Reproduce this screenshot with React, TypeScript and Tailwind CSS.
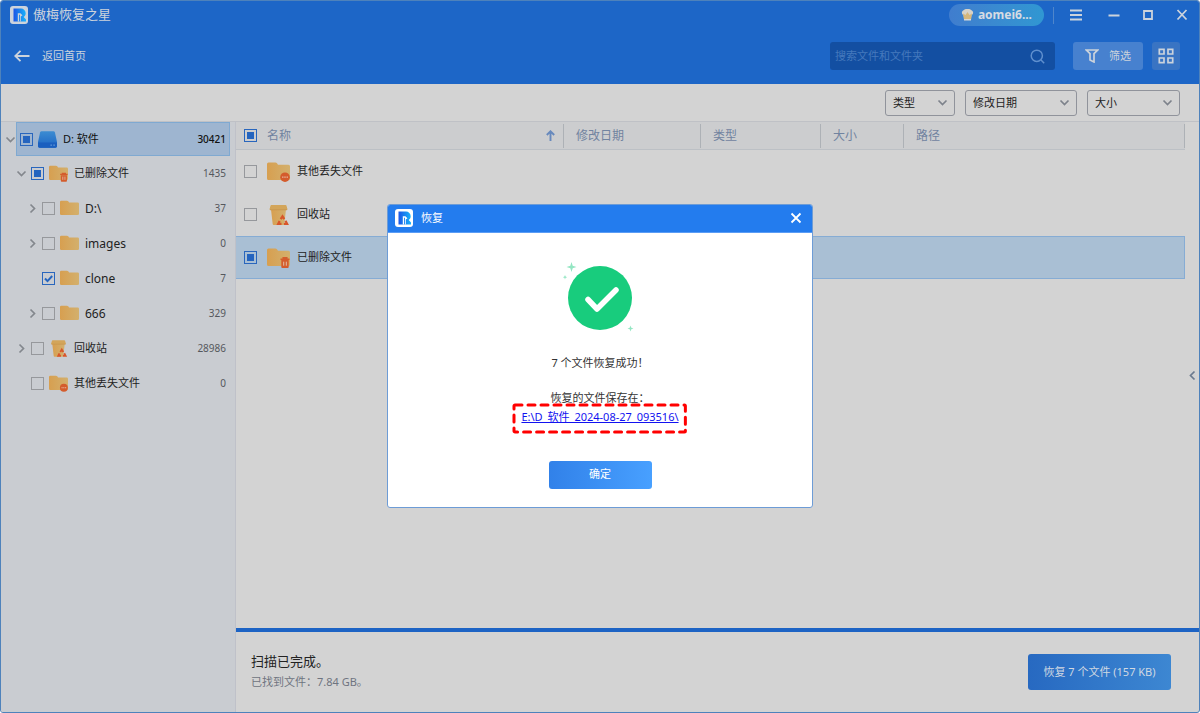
import { useState } from "react";
import type { ReactNode } from "react";

type CheckState = "none" | "some" | "all";
type IconKind = "drive" | "folder" | "deleted" | "lost" | "recycle";

type TreeItem = {
  name: string;
  count: number;
  level: 0 | 1 | 2;
  icon: IconKind;
  check: CheckState;
  arrow?: "open" | "closed";
};

const TREE: TreeItem[] = [
  { name: "D: 软件", count: 30421, level: 0, icon: "drive", check: "some", arrow: "open" },
  { name: "已删除文件", count: 1435, level: 1, icon: "deleted", check: "some", arrow: "open" },
  { name: "D:\\", count: 37, level: 2, icon: "folder", check: "none", arrow: "closed" },
  { name: "images", count: 0, level: 2, icon: "folder", check: "none", arrow: "closed" },
  { name: "clone", count: 7, level: 2, icon: "folder", check: "all" },
  { name: "666", count: 329, level: 2, icon: "folder", check: "none", arrow: "closed" },
  { name: "回收站", count: 28986, level: 1, icon: "recycle", check: "none", arrow: "closed" },
  { name: "其他丢失文件", count: 0, level: 1, icon: "lost", check: "none" },
];

const FILES: { name: string; icon: IconKind; check: CheckState }[] = [
  { name: "其他丢失文件", icon: "lost", check: "none" },
  { name: "回收站", icon: "recycle", check: "none" },
  { name: "已删除文件", icon: "deleted", check: "some" },
];

const INDENT = { 0: "pl-1", 1: "pl-[15px]", 2: "pl-[26px]" };

function Logo() {
  return (
    <svg className="size-[18px] shrink-0" viewBox="0 0 18 18" aria-hidden="true">
      <defs>
        <linearGradient id="logo-fill" x1="0" x2="1">
          <stop offset="0" stopColor="#1b55e6" />
          <stop offset="1" stopColor="#19b4fa" />
        </linearGradient>
      </defs>
      <rect width="18" height="18" rx="3" fill="currentColor" />
      <path d="M3.500 2.500H11a4.700 4.700 0 0 1 4.700 4.700c0 1.700-.8 3-2 3.800l2.300 2.500v2H3.500z" fill="url(#logo-fill)" />
      <path d="M7.800 15.500V7.200h2.600l2.100 2-1.700 1.300v5h-.9V8.800h-.9v6.700z" fill="currentColor" />
    </svg>
  );
}

function FolderBase() {
  return (
    <path
      d="M0 2a1.500 1.500 0 0 1 1.500-1.500h6.800a2 2 0 0 1 1.700.8l1 1.500h10.500A1.500 1.500 0 0 1 23 4.300v12.200a1.500 1.500 0 0 1-1.500 1.500h-20A1.500 1.500 0 0 1 0 16.500z"
      fill="url(#folder-fill)"
    />
  );
}

function ItemIcon({ kind, className }: { kind: IconKind; className: string }) {
  return (
    <svg className={`shrink-0 ${className}`} viewBox="0 0 23 20" aria-hidden="true">
      <defs>
        <linearGradient id="folder-fill" x1="0" x2="1">
          <stop offset="0" stopColor="#d79f50" />
          <stop offset="1" stopColor="#d3b06d" />
        </linearGradient>
        <linearGradient id="drive-fill" x1="0" y1="0" x2="0" y2="1">
          <stop offset="0" stopColor="#3c8cd2" />
          <stop offset="1" stopColor="#1c65c4" />
        </linearGradient>
      </defs>
      {kind === "drive" && (
        <>
          <path d="M2.500 1.500A2 2 0 0 1 4.400 0h14.200a2 2 0 0 1 1.900 1.500L23 13v5a2 2 0 0 1-2 2H2a2 2 0 0 1-2-2v-5z" fill="url(#drive-fill)" />
          <path d="M0 13.500h23V18a2 2 0 0 1-2 2H2a2 2 0 0 1-2-2z" fill="#1a5fbf" />
          <path d="M15 16.800h2M18.500 16.800h2" stroke="#6ea3de" strokeWidth="1.200" />
        </>
      )}
      {kind === "folder" && <FolderBase />}
      {kind === "deleted" && (
        <>
          <FolderBase />
          <path d="M13.500 11.200h9M16.200 11V9.700h3.600V11" stroke="#d45c2c" strokeWidth="1.500" fill="none" />
          <path d="M14.300 12h7.400v7a1 1 0 0 1-1 1h-5.400a1 1 0 0 1-1-1z" fill="#d45c2c" />
          <path d="M16.700 13.700v4M19.300 13.700v4" stroke="#e2bfa6" />
        </>
      )}
      {kind === "lost" && (
        <>
          <FolderBase />
          <circle cx="18" cy="15.200" r="4.800" fill="#d45c2c" />
          <path d="M15.200 15.200h1.200M17.400 15.200h1.200M19.600 15.200h1.200" stroke="#ebc9b5" strokeWidth="1.300" />
        </>
      )}
      {kind === "recycle" && (
        <>
          <path d="M4 4.500h15L17.300 19a1 1 0 0 1-1 .9H6.700a1 1 0 0 1-1-.9z" fill="url(#folder-fill)" />
          <path d="M4.500 0h14a1 1 0 0 1 1 .8l1 3.400a.8.8 0 0 1-.8.8H3.300a.8.8 0 0 1-.8-.8l1-3.400a1 1 0 0 1 1-.8z" fill="#d3a55a" />
          <path d="M3 4.800h17" stroke="#c5914a" strokeWidth=".7" />
          <path d="m13.700 14.200 1.800-2.900 1.800 2.900M18.500 15.800l1.600 3h-3.200M14.500 18.800h-3.300l1.400-2.800" fill="none" stroke="#d8562a" strokeWidth="2.200" />
        </>
      )}
    </svg>
  );
}

function Checkbox({ state, label }: { state: CheckState; label: string }) {
  const tone =
    state === "none"
      ? "border-[#96989c]"
      : state === "some"
        ? "border-[#2966bd] bg-[#2464bf] bg-clip-content"
        : "border-[#2966bd]";
  return (
    <span className="relative flex size-[13px] shrink-0">
      <input
        type="checkbox"
        aria-label={label}
        defaultChecked={state === "all"}
        ref={(el) => {
          if (el) el.indeterminate = state === "some";
        }}
        className={`size-[13px] appearance-none border p-[2px] ${tone}`}
      />
      {state === "all" && (
        <svg className="pointer-events-none absolute inset-0" viewBox="0 0 13 13" aria-hidden="true">
          <path d="m3 6.500 2.500 2.600L10.200 4" fill="none" stroke="#2464bf" strokeWidth="2" />
        </svg>
      )}
    </span>
  );
}

function Chevron({ dir, className }: { dir: "down" | "right" | "left"; className: string }) {
  const d = { down: "M1.500 3.500 5.500 7.500l4-4", right: "m3.500 1.500 4 4-4 4", left: "m7.500 1.500-4 4 4 4" }[dir];
  return (
    <svg className={`size-[11px] ${className}`} viewBox="0 0 11 11" aria-hidden="true">
      <path d={d} fill="none" stroke="currentColor" strokeWidth="1.700" />
    </svg>
  );
}

function FilterSelect({ label, width }: { label: string; width: string }) {
  return (
    <div className={`relative ${width}`}>
      <select
        aria-label={label}
        className="h-[26px] w-full appearance-none rounded-[3px] border border-[#90939b] pl-[7px] text-[11px] text-[#222]"
      >
        <option>{label}</option>
      </select>
      <Chevron dir="down" className="pointer-events-none absolute top-2 right-[7px] text-[#7d828b]" />
    </div>
  );
}

function WindowButton({ label, children }: { label: string; children: ReactNode }) {
  return (
    <button type="button" aria-label={label} className="flex size-4 items-center justify-center">
      <svg className="size-4" viewBox="0 0 16 16" fill="none" stroke="currentColor" strokeWidth="1.800" aria-hidden="true">
        {children}
      </svg>
    </button>
  );
}

function Header() {
  return (
    <header className="flex h-[83px] shrink-0 flex-col bg-[#1d66c7] text-[#ccd3dc]">
      <div className="flex h-7 items-center pr-[9px] pl-[9px]">
        <Logo />
        <h1 className="ml-[5px] flex-1 text-[13px]">傲梅恢复之星</h1>
        <button
          type="button"
          className="flex h-[22px] items-center gap-1 rounded-full bg-linear-to-r from-[#407dce] to-[#3097d2] px-3 text-[12px] font-bold text-[#d6dce3]"
        >
          <svg className="h-3 w-[13px]" viewBox="0 0 13 12" aria-hidden="true">
            <path d="M2.500 6A2.500 2.500 0 0 1 2.500 1.300 4.500 4.500 0 0 1 6.500 0a4.500 4.500 0 0 1 4 1.300A2.500 2.500 0 0 1 10.500 6L10 9H3z" fill="#d7d2c8" />
            <path d="M2 4.500 4.500 6l2-3 2 3L11 4.500l-1 6.500H3z" fill="#d6b77c" />
            <path d="M3 10.800h7" stroke="#d8d8d5" strokeWidth="1.500" />
          </svg>
          aomei6...
        </button>
        <span className="mr-3.5 ml-[9px] h-[17px] w-px bg-[#4f86cb]" />
        <div className="flex items-center gap-[18px]">
          <div className="mr-1">
            <WindowButton label="菜单">
              <path d="M2 3.500h12M2 8h12M2 12.500h12" />
            </WindowButton>
          </div>
          <WindowButton label="最小化">
            <path d="M2.500 8.500h11" />
          </WindowButton>
          <WindowButton label="最大化">
            <path d="M4 4h8v8H4z" />
          </WindowButton>
          <WindowButton label="关闭">
            <path d="m3.500 3 9 9.500M12.500 3l-9 9.500" />
          </WindowButton>
        </div>
      </div>

      <div className="mt-[13px] flex h-7 items-center pr-[19px] pl-[13px] text-[11px]">
        <button type="button" className="flex items-center gap-3">
          <svg className="h-3 w-4" viewBox="0 0 16 12" fill="none" stroke="currentColor" strokeWidth="1.800" aria-hidden="true">
            <path d="M6.500.8 1.200 6l5.300 5.200M1.200 6h14.300" />
          </svg>
          返回首页
        </button>
        <label className="ml-auto flex h-7 w-[225px] items-center rounded-[3px] bg-[#134fa2] pr-2.5 pl-[5px]">
          <input
            type="text"
            aria-label="搜索"
            placeholder="搜索文件和文件夹"
            className="min-w-0 flex-1 bg-transparent placeholder:text-[#4579bd] focus:outline-none"
          />
          <svg className="size-[15px] text-[#5f8fce]" viewBox="0 0 15 15" fill="none" stroke="currentColor" strokeWidth="1.500" aria-hidden="true">
            <circle cx="6.800" cy="6.800" r="5.600" />
            <path d="m10.800 10.800 3.400 3.400" />
          </svg>
        </label>
        <button type="button" className="ml-[18px] flex h-7 w-[70px] items-center justify-center gap-2.5 rounded-[3px] bg-[#4781cf]">
          <svg className="size-[14px]" viewBox="0 0 14 14" fill="none" stroke="currentColor" strokeWidth="1.700" aria-hidden="true">
            <path d="M1.200 1h11.600L9 4.500V13L5 11V4.500z" />
          </svg>
          筛选
        </button>
        <button type="button" aria-label="网格视图" className="ml-[9px] flex size-7 items-center justify-center rounded-[3px] bg-[#3974c3]">
          <svg className="size-4" viewBox="0 0 16 16" fill="none" stroke="currentColor" strokeWidth="1.700" aria-hidden="true">
            <path d="M1.300 1.300h4.700v4.700H1.300zM10 1.300h4.700v4.700H10zM1.300 10h4.700v4.700H1.300zM10 10h4.700v4.700H10z" />
          </svg>
        </button>
      </div>
    </header>
  );
}

function Sidebar() {
  return (
    <nav className="w-[235px] shrink-0 border-r border-[#bfc1c9] bg-[#c9ccd1]">
      <ul>
        {TREE.map((item) => {
          const root = item.level === 0;
          const latin = /^[\x20-\x7e]+$/.test(item.name);
          return (
            <li key={item.name} className={`flex items-center pr-[5px] ${INDENT[item.level]} ${root ? "h-[34px]" : "h-[35px]"}`}>
              <button type="button" aria-label={`展开 ${item.name}`} className="flex w-[11px] shrink-0 justify-center text-[#83878d]">
                {item.arrow && <Chevron dir={item.arrow === "open" ? "down" : "right"} className="" />}
              </button>
              <div
                className={`flex h-full flex-1 items-center border pr-[3px] pl-[3px] ${root ? "border-[#7fa9d1] bg-[#9eb5d0] text-[#111]" : "border-transparent text-[#222]"}`}
              >
                <Checkbox state={item.check} label={item.name} />
                <ItemIcon kind={item.icon} className="mr-1.5 ml-[5px] h-[17px] w-[19px]" />
                <span className={`flex-1 ${latin ? "text-[12px]" : "text-[11px]"}`}>{item.name}</span>
                <span className={`text-[10px] ${root ? "font-medium" : "text-[#55585d]"}`}>{item.count}</span>
              </div>
            </li>
          );
        })}
      </ul>
    </nav>
  );
}

function FileTable() {
  return (
    <table className="w-full table-fixed border-separate border-spacing-0 text-left">
      <colgroup>
        <col className="w-[328px]" />
        <col className="w-[137px]" />
        <col className="w-[120px]" />
        <col className="w-[83px]" />
        <col />
      </colgroup>
      <thead className="bg-[#cccdcf] text-[12px] text-[#7183a0]">
        <tr>
          <th className="h-7 border-b border-[#bcc0c5] p-0 font-normal">
            <div className="flex h-6 items-center border-r border-[#adb1b6] pr-2 pl-2">
              <Checkbox state="some" label="全选" />
              <span className="ml-2.5 flex-1">名称</span>
              <svg className="h-[11px] w-[9px] text-[#6789bd]" viewBox="0 0 9 11" fill="none" stroke="currentColor" strokeWidth="1.900" aria-label="升序">
                <path d="M4.500 11V1.500M.8 5l3.700-3.700L8.200 5" />
              </svg>
            </div>
          </th>
          {["修改日期", "类型", "大小", "路径"].map((title) => (
            <th key={title} className="border-b border-[#bcc0c5] p-0 font-normal">
              <div className="flex h-6 items-center border-r border-[#adb1b6] pl-3">{title}</div>
            </th>
          ))}
        </tr>
      </thead>
      <tbody className="text-[11px] text-[#222]">
        {FILES.map((file) => {
          const selected = file.check === "some";
          const cell = selected ? "border-y border-[#86acd4] bg-[#a9bfd4]" : "border-y border-transparent";
          return (
            <tr key={file.name}>
              <td className={`h-[43px] p-0 ${cell}`}>
                <div className="flex items-center pl-2">
                  <Checkbox state={file.check} label={file.name} />
                  <ItemIcon kind={file.icon} className="mr-[7px] ml-2.5 h-5 w-[23px]" />
                  {file.name}
                </div>
              </td>
              <td className={cell} />
              <td className={cell} />
              <td className={cell} />
              <td className={`${cell} border-r`} />
            </tr>
          );
        })}
      </tbody>
    </table>
  );
}

function RecoveryDialog({ onClose }: { onClose: () => void }) {
  return (
    <div className="fixed inset-0 flex items-center justify-center pb-0.5">
      <div
        role="dialog"
        aria-modal="true"
        aria-label="恢复"
        className="w-[426px] overflow-hidden rounded-[3px] border border-[#6d9cd6] bg-white text-[11px] text-[#333]"
      >
        <div className="flex h-7 items-center border-b border-[#5b9df5] bg-[#237cee] pr-2.5 pl-[7px] text-white">
          <Logo />
          <h2 className="ml-2 flex-1">恢复</h2>
          <button type="button" aria-label="关闭" onClick={onClose}>
            <svg className="size-3" viewBox="0 0 12 12" stroke="currentColor" strokeWidth="1.800" aria-hidden="true">
              <path d="m1.500 1.500 9 9M10.500 1.500l-9 9" />
            </svg>
          </button>
        </div>
        <div className="flex flex-col items-center pt-7 pb-[18px]">
          <svg className="h-[72px] w-20" viewBox="560 261 80 72" aria-hidden="true">
            <circle cx="600" cy="298" r="32" fill="#18cc7d" />
            <path d="m588 299.500 9 9.500 19-19" fill="none" stroke="#fff" strokeWidth="5.500" strokeLinecap="round" strokeLinejoin="round" />
            <path
              d="m571.500 262 1.200 3.800 3.800 1.200-3.800 1.200-1.200 3.800-1.200-3.800-3.800-1.200 3.800-1.200zM565 275l.6 1.600 1.600.6-1.600.6-.6 1.600-.6-1.600-1.600-.6 1.600-.6zM630.500 325.500l.8 2.200 2.200.8-2.200.8-.8 2.200-.8-2.200-2.200-.8 2.200-.8z"
              fill="#94e6c3"
            />
          </svg>
          <p className="mt-5 leading-5">7 个文件恢复成功！</p>
          <p className="mt-[15px] leading-5">恢复的文件保存在：</p>
          <div className="relative flex h-5 items-center px-1.5">
            <a href="#saved" className="text-[#1212f0] underline">
              E:\D_软件_2024-08-27_093516\
            </a>
            <svg className="pointer-events-none absolute -inset-x-0.5 -top-1 h-[30px] w-[calc(100%+4px)] overflow-visible" aria-hidden="true">
              <rect x="1" y="1" width="99%" height="27" rx="1" fill="none" stroke="#f00" strokeWidth="3" strokeDasharray="7 6" strokeLinecap="round" />
            </svg>
          </div>
          <button
            type="button"
            onClick={onClose}
            className="mt-[33px] h-7 w-[103px] rounded-[3px] bg-linear-to-r from-[#3181e9] to-[#48a0ff] text-white"
          >
            确定
          </button>
        </div>
      </div>
    </div>
  );
}

export default function App() {
  const [dialogOpen, setDialogOpen] = useState(true);

  return (
    <div className="flex min-h-screen flex-col overflow-hidden rounded-[3px] border border-[#4e82bb] bg-[#d3d3d3] font-['Noto_Sans','Noto_Sans_CJK_SC',sans-serif]">
      <Header />
      <div className="flex h-[38px] shrink-0 items-center justify-end gap-2.5 border-b border-[#bfc1c6] pr-[19px]">
        <FilterSelect label="类型" width="w-[70px]" />
        <FilterSelect label="修改日期" width="w-[112px]" />
        <FilterSelect label="大小" width="w-[93px]" />
      </div>

      <div className="flex flex-1">
        <Sidebar />
        <main className="flex min-w-0 flex-1 flex-col">
          <div className="flex flex-1">
            <div className="min-w-0 flex-1">
              <FileTable />
            </div>
            <button type="button" aria-label="展开预览" className="flex w-3.5 items-center justify-center text-[#6c7a8e]">
              <Chevron dir="left" className="" />
            </button>
          </div>
          <footer className="flex h-[84px] shrink-0 items-center justify-between border-t-4 border-[#1d63c4] pr-7 pl-[15px]">
            <div className="pb-0.5">
              <p className="text-[13px] leading-[22px] text-[#222]">扫描已完成。</p>
              <p className="text-[11px] leading-5 text-[#6f7480]">已找到文件：7.84 GB。</p>
            </div>
            <button
              type="button"
              className="h-9 w-[143px] rounded-[3px] bg-linear-to-r from-[#2769c1] to-[#3d87d2] text-[11px] text-[#d0d8e2]"
              onClick={() => setDialogOpen(true)}
            >
              恢复 7 个文件 (157 KB)
            </button>
          </footer>
        </main>
      </div>

      {dialogOpen && <RecoveryDialog onClose={() => setDialogOpen(false)} />}
    </div>
  );
}
